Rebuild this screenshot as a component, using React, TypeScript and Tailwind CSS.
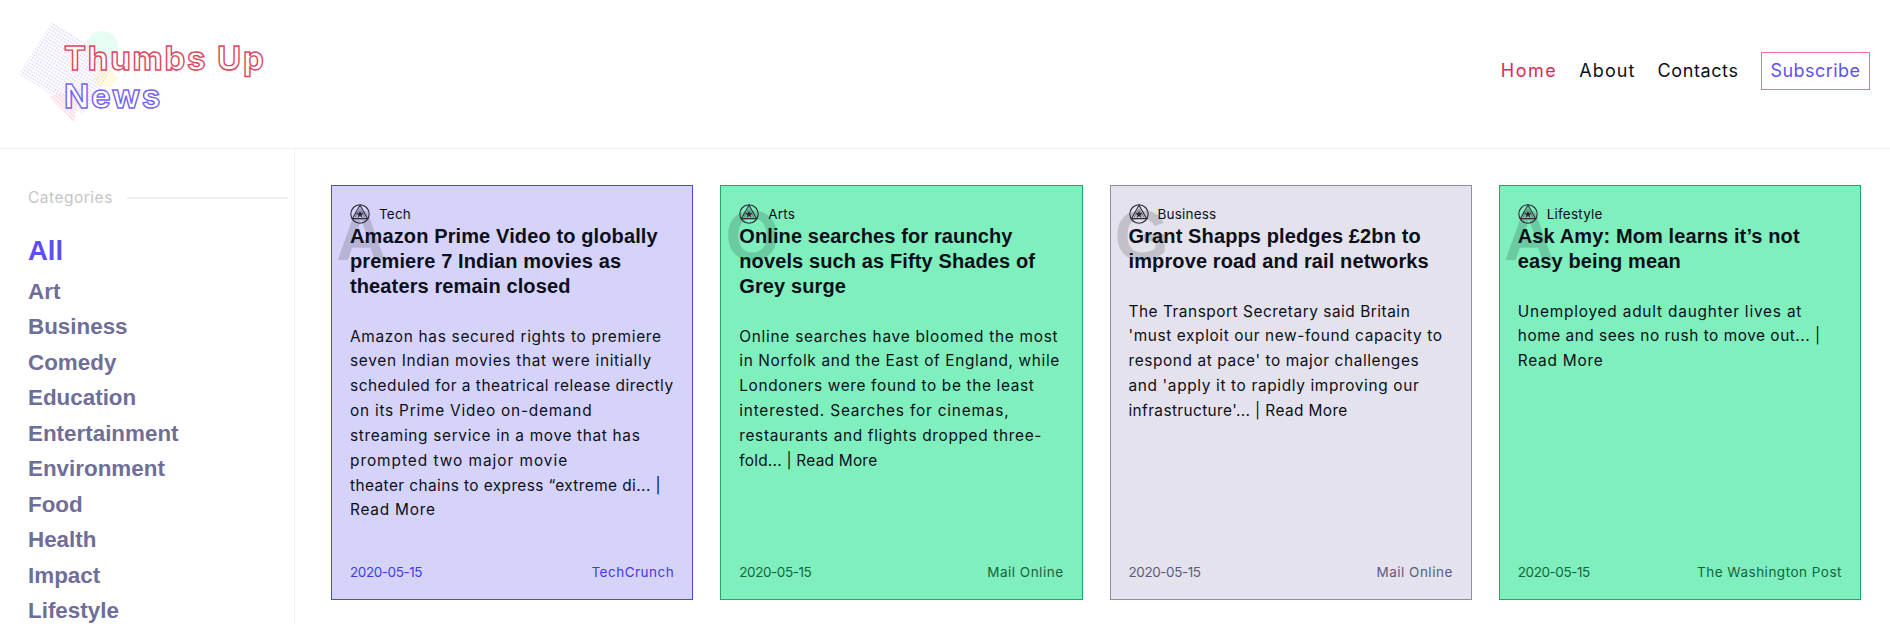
type lineType = { text: string; tracking: string };

type articleType = {
  category: string;
  title: string[];
  lines: lineType[];
  date: string;
  source: string;
  card: string;
  footer: string;
};

const categories = [
  "Art",
  "Business",
  "Comedy",
  "Education",
  "Entertainment",
  "Environment",
  "Food",
  "Health",
  "Impact",
  "Lifestyle",
];

const articles: articleType[] = [
  {
    category: "Tech",
    title: [
      "Amazon Prime Video to globally",
      "premiere 7 Indian movies as",
      "theaters remain closed",
    ],
    lines: [
      {
        text: "Amazon has secured rights to premiere",
        tracking: "tracking-[0.7px]",
      },
      {
        text: "seven Indian movies that were initially",
        tracking: "tracking-[0.7px]",
      },
      {
        text: "scheduled for a theatrical release directly",
        tracking: "tracking-[0.52px]",
      },
      { text: "on its Prime Video on-demand", tracking: "tracking-[0.77px]" },
      {
        text: "streaming service in a move that has",
        tracking: "tracking-[0.67px]",
      },
      { text: "prompted two major movie", tracking: "tracking-[0.97px]" },
      {
        text: "theater chains to express “extreme di... |",
        tracking: "tracking-[0.42px]",
      },
      { text: "Read More", tracking: "tracking-[0.77px]" },
    ],
    date: "2020-05-15",
    source: "TechCrunch",
    card: "bg-[#d6d3fb] border-[#5046e5]",
    footer: "text-[#4338e8]",
  },
  {
    category: "Arts",
    title: [
      "Online searches for raunchy",
      "novels such as Fifty Shades of",
      "Grey surge",
    ],
    lines: [
      {
        text: "Online searches have bloomed the most",
        tracking: "tracking-[0.74px]",
      },
      {
        text: "in Norfolk and the East of England, while",
        tracking: "tracking-[0.65px]",
      },
      {
        text: "Londoners were found to be the least",
        tracking: "tracking-[0.65px]",
      },
      {
        text: "interested. Searches for cinemas,",
        tracking: "tracking-[0.8px]",
      },
      {
        text: "restaurants and flights dropped three-",
        tracking: "tracking-[0.67px]",
      },
      { text: "fold... | Read More", tracking: "tracking-[0.24px]" },
    ],
    date: "2020-05-15",
    source: "Mail Online",
    card: "bg-[#7eefbd] border-[#25a76a]",
    footer: "text-[#13653f]",
  },
  {
    category: "Business",
    title: ["Grant Shapps pledges £2bn to", "improve road and rail networks"],
    lines: [
      {
        text: "The Transport Secretary said Britain",
        tracking: "tracking-[0.53px]",
      },
      {
        text: "'must exploit our new-found capacity to",
        tracking: "tracking-[0.61px]",
      },
      {
        text: "respond at pace' to major challenges",
        tracking: "tracking-[0.6px]",
      },
      {
        text: "and 'apply it to rapidly improving our",
        tracking: "tracking-[0.65px]",
      },
      { text: "infrastructure'... | Read More", tracking: "tracking-[0.39px]" },
    ],
    date: "2020-05-15",
    source: "Mail Online",
    card: "bg-[#e4e2ec] border-[#8f8cb0]",
    footer: "text-[#5d5a80]",
  },
  {
    category: "Lifestyle",
    title: ["Ask Amy: Mom learns it’s not", "easy being mean"],
    lines: [
      {
        text: "Unemployed adult daughter lives at",
        tracking: "tracking-[0.8px]",
      },
      {
        text: "home and sees no rush to move out... |",
        tracking: "tracking-[0.53px]",
      },
      { text: "Read More", tracking: "tracking-[0.77px]" },
    ],
    date: "2020-05-15",
    source: "The Washington Post",
    card: "bg-[#7eefbd] border-[#25a76a]",
    footer: "text-[#13653f]",
  },
];

const LogoShapes = () => (
  <svg
    className="absolute left-[18px] top-[20px]"
    width="104"
    height="104"
    viewBox="18 20 104 104"
  >
    <defs>
      <pattern
        id="dots"
        width="3"
        height="3"
        patternUnits="userSpaceOnUse"
        patternTransform="rotate(32)"
      >
        <circle cx="1.5" cy="1.5" r="0.8" fill="#c9c4fb" />
      </pattern>
      <pattern
        id="yellowDots"
        width="2.4"
        height="2.4"
        patternUnits="userSpaceOnUse"
        patternTransform="rotate(45)"
      >
        <circle cx="1.2" cy="1.2" r="0.8" fill="#fdeea0" />
      </pattern>
      <pattern
        id="stripes"
        width="3"
        height="3"
        patternUnits="userSpaceOnUse"
        patternTransform="rotate(42)"
      >
        <rect width="3" height="1.8" fill="#fddde4" />
      </pattern>
    </defs>
    <path d="M52 22L116 62L83 114L19 74Z" fill="url(#dots)" />
    <circle cx="102" cy="47" r="16" fill="#e5fdf2" />
    <path d="M93 79L101 70H111L118 79L111 87H101Z" fill="url(#yellowDots)" />
    <path d="M49 97L81 88L74 122Z" fill="url(#stripes)" />
  </svg>
);

const BadgeIcon = () => (
  <svg
    width="20"
    height="20"
    viewBox="0 0 20 20"
    fill="none"
    stroke="#2b2b38"
    strokeWidth="1.1"
  >
    <circle cx="10" cy="10" r="9.2" />
    <path d="M10 1.2L2.4 14.6H17.6Z" />
    <path d="M10 4.8L5.2 13.2M10 4.8L14.8 13.2" strokeWidth="0.5" />
    <path
      d="M10 6.4L11 9.1L13.8 9.2L11.6 11L12.4 13.7L10 12.1L7.6 13.7L8.4 11L6.2 9.2L9 9.1Z"
      fill="#2b2b38"
      stroke="none"
    />
  </svg>
);

const Header = () => (
  <header className="flex h-[149px] items-start justify-between border-b border-[#efeff4] pr-5">
    <div className="relative pl-[64px] pt-[39px]">
      <LogoShapes />
      <h1 className="relative text-[33px] font-bold leading-[38px] tracking-[1.8px] text-white">
        <span className="block [-webkit-text-stroke:1.4px_#e0455f]">
          Thumbs Up
        </span>
        <span className="block [-webkit-text-stroke:1.4px_#7462f5]">News</span>
      </h1>
    </div>

    {/* NAV */}
    <nav className="mt-[52px] flex h-[38px] items-center whitespace-nowrap text-[18px]">
      <a className="mr-[22px] pb-px tracking-[1.5px] text-[#dc2c4e]">Home</a>
      <a className="mr-[22px] pb-px tracking-[1.1px] text-[#0c0f1a]">About</a>
      <a className="mr-[22.5px] pb-px tracking-[0.6px] text-[#0c0f1a]">
        Contacts
      </a>
      <a className="flex h-[38px] w-[109px] items-center justify-center border border-[#f76d92] pb-px tracking-[0.45px] text-[#624ff5]">
        Subscribe
      </a>
    </nav>
  </header>
);

const Sidebar = () => (
  <aside className="w-[295px] shrink-0 border-r border-[#efeff4] pl-7 pr-[6px] pt-[37px]">
    <div className="flex items-center">
      <span className="text-[15.5px] leading-6 tracking-[0.5px] text-[#c6c6c6]">
        Categories
      </span>
      <div className="ml-[14px] h-[2px] flex-1 bg-[#efeff6]" />
    </div>
    <ul className="mt-[21px] font-['Liberation_Sans',Arial,sans-serif] text-[22.4px] font-bold text-[#6f6e99]">
      <li className="mb-[3px] h-[40px] text-[27.5px] leading-[40px] text-[#5f4cf5]">
        All
      </li>
      {categories.map((category) => (
        <li key={category} className="h-[35.45px] leading-[35.45px]">
          {category}
        </li>
      ))}
    </ul>
  </aside>
);

const ArticleCard = ({ article }: { article: articleType }) => (
  <article
    className={`relative flex h-[415px] flex-col whitespace-nowrap border px-[18px] pt-[18px] text-[#0c0f1a] ${article.card}`}
  >
    {/* FIRST LETTER BEHIND THE TITLE */}
    <span className="absolute left-1 top-[14px] font-['Liberation_Sans',Arial,sans-serif] text-[70px] font-bold leading-[72px] text-black/15">
      {article.title[0][0]}
    </span>

    <div className="relative flex h-5 items-center gap-[9px] text-[13.5px] tracking-[0.2px]">
      <BadgeIcon />
      <span>{article.category}</span>
    </div>
    <h2 className="relative font-['Liberation_Sans',Arial,sans-serif] text-[20px] font-bold leading-[25px] tracking-[0.12px]">
      {article.title.map((line) => (
        <span key={line} className="block">
          {line}
        </span>
      ))}
    </h2>
    <p className="relative mt-[25.5px] text-[15.4px] leading-[24.85px]">
      {article.lines.map((line) => (
        <span key={line.text} className={`block ${line.tracking}`}>
          {line.text}
        </span>
      ))}
    </p>

    {/* FOOTER */}
    <div
      className={`mb-[17px] mt-auto flex justify-between text-[13.5px] leading-5 ${article.footer}`}
    >
      <span className="tracking-[-0.42px]">{article.date}</span>
      <span className="tracking-[0.5px]">{article.source}</span>
    </div>
  </article>
);

export default function App() {
  return (
    <div className="flex h-[624px] flex-col overflow-hidden bg-white font-['Inter',sans-serif]">
      <Header />
      <div className="flex min-h-0 flex-1">
        <Sidebar />
        <main className="grid flex-1 grid-cols-4 gap-[27px] pl-9 pr-[29px] pt-9">
          {articles.map((article) => (
            <ArticleCard key={article.title[0]} article={article} />
          ))}
        </main>
      </div>
    </div>
  );
}
